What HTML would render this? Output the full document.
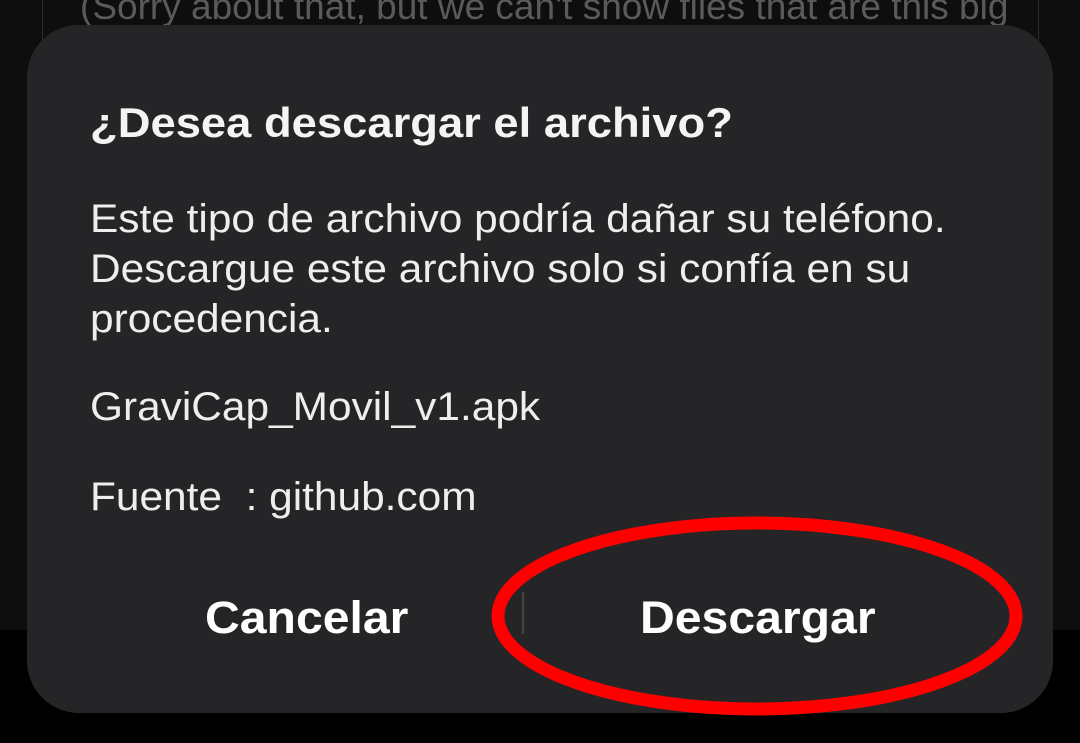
<!DOCTYPE html>
<html><head><meta charset="utf-8"><style>
body{margin:0;width:1080px;height:743px;background:#000;position:relative;overflow:hidden;font-family:"Liberation Sans",sans-serif;}
.top{position:absolute;left:0;top:0;width:1080px;height:630px;background:#0e0e0e;}
.box{position:absolute;left:42px;top:-10px;width:995px;height:640px;border:1px solid #2a2a2a;border-top:none;}
.sorry{position:absolute;left:80px;top:-14px;font-size:37px;color:#5a5a5a;white-space:nowrap;transform:scaleX(1.0);transform-origin:left}
.dlg{position:absolute;left:27px;top:25px;width:1026px;height:688px;background:#252527;border-radius:52px;}
.t{position:absolute;left:90px;color:#eee;white-space:nowrap;font-size:40px;line-height:50px;transform:scaleX(1.06);transform-origin:left}
.title{top:98px;font-size:42px;font-weight:bold;color:#f4f4f4;transform:scaleX(1.08)}
.btn{position:absolute;top:588px;font-size:45px;line-height:60px;font-weight:bold;color:#fff;transform:scaleX(1.07);transform-origin:left}
.sep{position:absolute;left:522px;top:592px;width:2px;height:42px;background:#444;}
</style></head><body>
<div class="top"></div><div class="box"></div>
<div class="sorry">(Sorry about that, but we can't show files that are this big</div>
<div class="dlg"></div>
<div class="t title">¿Desea descargar el archivo?</div>
<div class="t" style="top:194px">Este tipo de archivo podría dañar su teléfono.<br>Descargue este archivo solo si confía en su<br>procedencia.</div>
<div class="t" style="top:382px">GraviCap_Movil_v1.apk</div>
<div class="t" style="top:472px">Fuente &nbsp;: github.com</div>
<div class="btn" style="left:205px">Cancelar</div>
<div class="sep"></div>
<div class="btn" style="left:640px">Descargar</div>
<svg style="position:absolute;left:0;top:0" width="1080" height="743"><ellipse cx="757" cy="616" rx="259" ry="93" fill="none" stroke="#f00" stroke-width="13"/></svg>
</body></html>
